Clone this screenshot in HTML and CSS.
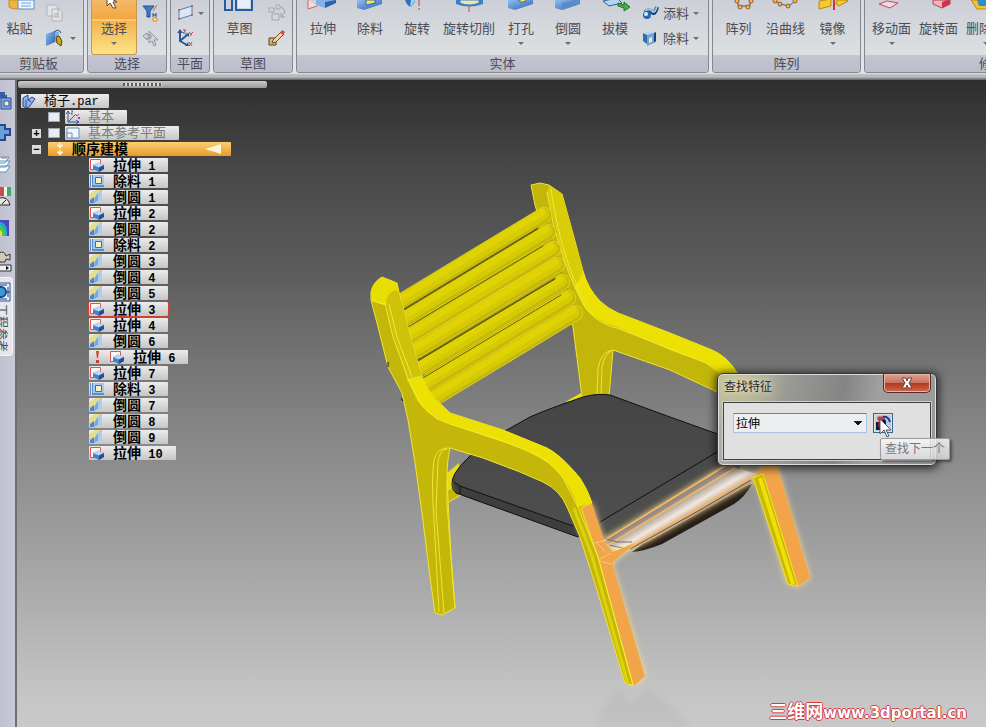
FILE: index.html
```html
<!DOCTYPE html>
<html lang="zh-CN">
<head>
<meta charset="utf-8">
<title>椅子.par</title>
<link rel="stylesheet" href="styles.css">
</head>
<body>
<svg class="defs" aria-hidden="true">
  <defs>
    <linearGradient id="blue" x1="0" y1="0" x2="1" y2="1"><stop offset="0" stop-color="#8fbdf0"/><stop offset="1" stop-color="#2a62b0"/></linearGradient>
    <symbol id="i-extrude" viewBox="0 0 16 14"><path d="M1.500 1.500h10v10h-10z" fill="#fff6f4" stroke="#d8584e"/><path d="M4 7l5-2.500 6 2.500v4l-5 3-6-3z" fill="#4c80c4"/><path d="M4 7l5-2.500 6 2.500-5 2.500z" fill="#b8d8f8"/><path d="M10 9.500l5-2.500v4l-5 3z" fill="#244f92"/></symbol>
    <symbol id="i-cut" viewBox="0 0 16 14"><path d="M1 1h14v12H1z" fill="#5c8ccc"/><path d="M4 1h11v10H4z" fill="#a4c8f0"/><path d="M6.500 3.500h6v6h-6z" fill="#f4f0c8" stroke="#3d6cab"/><path d="M2.500 1v12" stroke="#d6e6f8"/></symbol>
    <symbol id="i-round" viewBox="0 0 16 14"><path d="M0 12V6Q2 1 7 0h6Q6 4 5 13z" fill="#e8dc90"/><path d="M5 13Q5 4 13 0v11q-4-1-8 2z" fill="#74aade"/><path d="M1 13v-3l4-3v6z" fill="#4e86c8"/><path d="M9 3l4-3v11H9z" fill="#a8cdf0"/></symbol>
  </defs>
</svg>

<header class="ribbon">
  <section class="group g-clip">
    <div class="tools">
      <button class="big"><svg width="32" height="12" viewBox="0 0 32 12"><path d="M5 0h16v7q-10 4-16 0z" fill="#f0b63c" stroke="#c68a20"/><path d="M14 0h16v9H14z" fill="#edf5ff" stroke="#5a8cc8"/><path d="M17 3h10M17 6h10" stroke="#6fa4de"/></svg><span>粘贴</span></button>
      <div class="stack">
        <button class="small" aria-label="复制"><svg width="18" height="18" viewBox="0 0 18 18"><path d="M1 1h8l3 3v8H1zM6 5h7l3 3v9H6z" fill="#e2e3e7" stroke="#b1b2b8"/><path d="M8 10h5M8 13h6" stroke="#b1b2b8"/></svg></button>
        <button class="small" aria-label="特征"><svg width="18" height="18" viewBox="0 0 18 18"><path d="M0 5l9-3v11l-9 4z" fill="url(#blue)"/><path d="M9 2l4 1v11l-4-1z" fill="#7eb0e8"/><path d="M8 3q5-4 7 1" fill="none" stroke="#254a80"/><path d="M10 8l3-1 3 5-1 5-4-3z" fill="#c8a820" stroke="#54430c"/></svg><i class="arrow"></i></button>
      </div>
    </div>
    <h2>剪贴板</h2>
  </section>
  <section class="group g-select">
    <div class="tools">
      <button class="big active"><svg width="32" height="12" viewBox="0 0 32 12"><path d="M9-4v10l3-3 3 5h3l-3-6h4z" fill="#fff" stroke="#58473a"/></svg><span>选择</span><i class="arrow"></i></button>
      <div class="stack">
        <button class="small" aria-label="过滤"><svg width="18" height="18" viewBox="0 0 18 18"><path d="M1 2h11L8 7v6H5V7z" fill="#3c7cc8" stroke="#204d8c"/><path d="M11 9v4M14 9v4M11 11h3" stroke="#234f94"/><path d="M15 1l-4 6" stroke="#d65830"/><path d="M11 14h4v3h-4z" fill="#fff0c0" stroke="#d88820"/></svg></button>
        <button class="small" aria-label="选取工具"><svg width="18" height="18" viewBox="0 0 18 18"><path d="M1 7l4-3v2h4v3H5v2zM7 2l9 9h-4l2 5-2 1-2-5-3 2z" fill="#d2d4da" stroke="#92959e"/></svg></button>
      </div>
    </div>
    <h2>选择</h2>
  </section>
  <section class="group g-plane">
    <div class="tools">
      <div class="stack">
        <button class="small" aria-label="平面"><svg width="18" height="18" viewBox="0 0 18 18"><path d="M2 6l13-4v9L2 15z" fill="#dbe7f7" stroke="#527eb6"/><g fill="#d0504c"><circle cx="2" cy="6" r="1"/><circle cx="15" cy="2" r="1"/><circle cx="15" cy="11" r="1"/><circle cx="2" cy="15" r="1"/></g></svg><i class="arrow"></i></button>
        <button class="small" aria-label="坐标系"><svg width="18" height="18" viewBox="0 0 18 18"><path d="M3 2v10l7 4M3 12l7-6" fill="none" stroke="#28589c" stroke-width="2"/><path d="M3 0l3 4H0zM12 4v4l-4-3zM12 17H8l3-4z" fill="#28589c"/><path d="M6 1h3L6 4h3M12 3l2 2 2-2M14 5v2M12 13l3 4M15 13l-3 4" fill="none" stroke="#c83e3e"/></svg></button>
      </div>
    </div>
    <h2>平面</h2>
  </section>
  <section class="group g-sketch">
    <div class="tools">
      <button class="big"><svg width="32" height="12" viewBox="0 0 32 12"><path d="M1 0v10h7V0M12 0v10h16V0" fill="none" stroke="#245ca8" stroke-width="2"/><path d="M14 0h12v8H14z" fill="#e5effd"/></svg><span>草图</span></button>
      <div class="stack">
        <button class="small" aria-label="复制草图"><svg width="18" height="18" viewBox="0 0 18 18"><path d="M1 4h5v4H1zM8 1h4v4H8zM4 10h7v6H4z" fill="#d6d7dc" stroke="#a4a6ac"/><path d="M13 3q7 4 1 9M13 9v4h4" fill="none" stroke="#999ca4"/></svg></button>
        <button class="small" aria-label="编辑草图"><svg width="18" height="18" viewBox="0 0 18 18"><path d="M1 9h7v7H1z" fill="#e3b75c" stroke="#4c4234"/><path d="M5 11l8-8 3 2-8 8-4 1z" fill="#f2d7a0" stroke="#6d4b2c"/><path d="M14 1l3 2-2 3-3-2z" fill="#d84b4b"/></svg></button>
      </div>
    </div>
    <h2>草图</h2>
  </section>
  <section class="group g-solid">
    <div class="tools">
      <button class="big"><svg width="32" height="12" viewBox="0 0 32 12"><path d="M1 0v9l9-3" fill="#f3dadc" stroke="#dd5e56"/><path d="M9 0h20v3l-11 5-9-3z" fill="#82b0e4"/><path d="M18 2l11-2v3l-11 5z" fill="#2f65a8"/></svg><span>拉伸</span></button>
      <button class="big"><svg width="32" height="12" viewBox="0 0 32 12"><path d="M3 0h25v4L10 10 3 8z" fill="url(#blue)"/><path d="M12 0h9v3l-9 2z" fill="#f7e45e" stroke="#3968a8"/></svg><span>除料</span></button>
      <button class="big"><svg width="32" height="12" viewBox="0 0 32 12"><path d="M4 0h10q0 4-5 7Q5 4 4 0z" fill="#2e71ba"/><path d="M10 0h4q-1 4-5 7z" fill="#9fd0f1"/><path d="M18 0v10" stroke="#c34040" stroke-dasharray="6 2"/></svg><span>旋转</span></button>
      <button class="big"><svg width="32" height="12" viewBox="0 0 32 12"><path d="M3 0h27v4q-14 5-27 0z" fill="#3d7fc4"/><path d="M7 0h19v3q-10 4-19 0z" fill="#eae6b8" stroke="#477fb8"/><path d="M16 6v6" stroke="#e04444"/></svg><span>旋转切削</span></button>
      <button class="big"><svg width="32" height="12" viewBox="0 0 32 12"><path d="M3 0h25v4L10 10 3 8z" fill="url(#blue)"/><path d="M13 0q5 5 9-1z" fill="#f6e262" stroke="#3968a8"/></svg><span>打孔</span><i class="arrow"></i></button>
      <button class="big"><svg width="32" height="12" viewBox="0 0 32 12"><path d="M3 0h25v4L10 10 3 8z" fill="url(#blue)"/><path d="M10 3l18-4v5L10 10z" fill="#5a8ccc"/></svg><span>倒圆</span><i class="arrow"></i></button>
      <button class="big"><svg width="32" height="12" viewBox="0 0 32 12"><path d="M4 1l14-3 5 5-13 3z" fill="#b3d7f0" stroke="#2a6290"/><path d="M19 3l6 2V2l6 5-6 4V8l-6-2z" fill="#42ac45" stroke="#267532"/></svg><span>拔模</span></button>
      <div class="stack labelled">
        <button class="small"><svg width="18" height="18" viewBox="0 0 18 18"><path d="M4 8q4-3 7 0t5-5" fill="none" stroke="#183b66" stroke-width="4"/><path d="M4 7q4-3 7 0t5-5" fill="none" stroke="#9bc8e8" stroke-width="2"/><circle cx="6" cy="11" r="4" fill="#2c67a7"/><circle cx="5" cy="10" r="2" fill="#dceefb"/></svg><span>添料</span><i class="arrow"></i></button>
        <button class="small"><svg width="18" height="18" viewBox="0 0 18 18"><path d="M2 4l4 2v9l-4-3z" fill="#2f6eae"/><path d="M2 4l7-2 6 2-6 2z" fill="#b9d4ea"/><path d="M6 6l7-2v10l-7 3z" fill="#6ca6d8"/><path d="M8 9l3-1v5l-3 1z" fill="#f2e7a3"/><path d="M13 4l2-1v9l-2 2z" fill="#184278"/></svg><span>除料</span><i class="arrow"></i></button>
      </div>
    </div>
    <h2>实体</h2>
  </section>
  <section class="group g-array">
    <div class="tools">
      <button class="big"><svg width="32" height="12" viewBox="0 0 32 12"><path d="M15 0v6h12V0" fill="none" stroke="#584a3e"/><g fill="#f2b460" stroke="#975b20"><circle cx="14" cy="1" r="2"/><circle cx="17" cy="7" r="2"/><circle cx="25" cy="7" r="2"/><circle cx="28" cy="1" r="2"/></g></svg><span>阵列</span></button>
      <button class="big"><svg width="32" height="12" viewBox="0 0 32 12"><path d="M4 0l6 4 9 2 7-6" fill="none" stroke="#3d5e8a"/><g fill="#f2b460" stroke="#975b20"><circle cx="5" cy="1" r="2"/><circle cx="10" cy="4" r="2"/><circle cx="18" cy="6" r="2"/><circle cx="25" cy="1" r="2"/></g></svg><span>沿曲线</span></button>
      <button class="big"><svg width="32" height="12" viewBox="0 0 32 12"><path d="M2 1l12-2v7L2 9zM20 0h8l3 1-9 5-3-2z" fill="#f5c82c" stroke="#b98816"/><path d="M17 0v10" stroke="#d03434" stroke-width="2"/></svg><span>镜像</span><i class="arrow"></i></button>
    </div>
    <h2>阵列</h2>
  </section>
  <section class="group g-modify">
    <div class="tools">
      <button class="big"><svg width="32" height="12" viewBox="0 0 32 12"><path d="M3 4l8-3 11 2-8 5z" fill="#eedce2" stroke="#bd4a60"/></svg><span>移动面</span><i class="arrow"></i></button>
      <button class="big"><svg width="32" height="12" viewBox="0 0 32 12"><path d="M10 0h17v4l-8 4-9-4z" fill="#edb5bc" stroke="#bb3f52"/><path d="M19 2l8-3v5l-8 4z" fill="#ce354d"/></svg><span>旋转面</span></button>
      <button class="big"><svg width="32" height="12" viewBox="0 0 32 12"><path d="M1 0h25v9H7z" fill="#f5c12d" stroke="#c38715"/><path d="M7 0h20v6H9z" fill="#328ccb"/></svg><span>删除面</span><i class="arrow"></i></button>
    </div>
    <h2>修改</h2>
  </section>
</header>

<div class="work">
  <nav class="side">
    <button aria-label="零件库"><svg width="12" height="20" viewBox="0 0 12 20"><path d="M0 2h5v4H0zM0 5h7v3H0z" fill="#335da4"/><path d="M1 8h10v11H1z" fill="#7fa4df" stroke="#27519b"/><path d="M4 11h5v5H4z" fill="#f5f0c3" stroke="#27519b"/></svg></button>
    <button aria-label="特征库"><svg width="12" height="20" viewBox="0 0 12 20"><path d="M-1 3h6v4h5v6H5v5h-6z" fill="#6b9edb" stroke="#214a8d" stroke-width="2"/></svg></button>
    <button aria-label="图层"><svg width="12" height="20" viewBox="0 0 12 20"><path d="M-1 3H9l-4 6h-6zM-1 7h11l-4 6h-7zM-1 12h11l-4 6h-7z" fill="#fff" stroke="#5795c2"/><path d="M1 4h6" stroke="#c55d5d"/></svg></button>
    <button aria-label="传感器"><svg width="12" height="20" viewBox="0 0 12 20"><path d="M0 1h4v9H0z" fill="#c74c50"/><path d="M4 1h3v9H4z" fill="#f4f5ee"/><path d="M7 1h4v9H7z" fill="#3cac62"/><path d="M-1 12q9-2 11 7H-1z" fill="#e7e4dc" stroke="#292929"/><path d="M2 18l4-4" stroke="#222"/></svg></button>
    <button aria-label="仿真"><svg width="12" height="20" viewBox="0 0 12 20"><path d="M0 2h9v16H0z" fill="#4b47bd"/><path d="M0 4q8 1 7 14H0z" fill="#22a8d0"/><path d="M0 7q6 2 5 11H0z" fill="#40c65a"/><path d="M0 12q3 2 2 6H0z" fill="#f1dc35"/></svg></button>
    <button aria-label="动画"><svg width="12" height="22" viewBox="0 0 12 22"><path d="M-1 3q5-3 7 3l4-2v6l-4-1-1 3h-6z" fill="#d2c8bd" stroke="#3e3531"/><path d="M-1 15h12v6H-1z" fill="#eee" stroke="#333"/><path d="M6 16l3 2-3 2z"/></svg></button>
    <button class="tab" aria-label="工程参考"><svg width="12" height="20" viewBox="0 0 12 20"><path d="M0 1h10v18H0" fill="#eaf2fa" stroke="#294e94"/><circle cx="1" cy="10" r="5" fill="#3c9bd7" stroke="#164a86" stroke-width="2"/><path d="M8 5v10M6 10h4M0 3h7M0 17h7" stroke="#203c84"/></svg><span>工程参考</span></button>
  </nav>

  <main class="view">
    <svg class="model" width="969" height="647" viewBox="17 80 969 647" role="img" aria-label="椅子">
      <defs>
        <linearGradient id="apron" gradientUnits="userSpaceOnUse" x1="665" y1="493" x2="684" y2="525"><stop offset="0" stop-color="#6c625b"/><stop offset=".35" stop-color="#9b938b"/><stop offset=".65" stop-color="#f2e8dc"/><stop offset="1" stop-color="#a38b75"/></linearGradient>
        <linearGradient id="seat" x1="0" y1="0" x2="0" y2="1"><stop offset="0" stop-color="#454545"/><stop offset="1" stop-color="#505050"/></linearGradient>
        <filter id="glow" x="-40%" y="-20%" width="180%" height="140%"><feDropShadow dx="0" dy="0" stdDeviation="3" flood-color="#ffdf86" flood-opacity=".9"/></filter>
        <filter id="soft"><feGaussianBlur stdDeviation="3"/></filter>
        <g id="slat"><path d="M0 0L142-86" stroke="#ece33a" stroke-width="16"/><path d="M0 0L142-86" stroke="#c6b906" stroke-width="15"/><path d="M0-1L141-87" stroke="#d6c906" stroke-width="12"/><path d="M-1-3L140-89" stroke="#e0d304" stroke-width="7"/></g>
      </defs>
      <path d="M596 727q5-22 22-36l14 12 16-14 20 14 25 24z" fill="#999" opacity=".15" filter="url(#soft)"/>

      <path d="M531 185L540 183 549 185 562 194 572 230 583 271Q588 289 600 301 607 308 618 313L670 333 712 350Q727 356 738 374V405L713 390 670 370 613 350 609 397H582L573 327 563 300 535 205z" fill="#c3b60a" stroke="#eee532"/>
      <path d="M549 185L562 194 572 230 583 271Q588 289 600 301L587 310Q575 294 563 257L547 192z" fill="#d8cd07"/>
      <path d="M583 271Q588 289 600 301 607 308 618 313L670 333 712 350Q727 356 738 374L730 385Q718 368 706 363L670 350 617 327Q598 323 584 307L575 288z" fill="#ece102"/>
      <path d="M547 192Q552 225 563 257T587 310Q600 325 617 328L706 363Q718 370 728 383" fill="none" stroke="#f1e73a"/>
      <path d="M551 189Q556 225 566 257T590 308" fill="none" stroke="#f1e73a"/>
      <path d="M597 395L598 369Q600 352 613 350M601 395L602 367Q604 355 611 351M575 286L583 281" fill="none" stroke="#eee532"/>

      <path d="M401 301L544 214 576 313 433 399z" fill="#b1a508"/>
      <g fill="none" stroke-linecap="round">
        <use href="#slat" x="402" y="301"/><use href="#slat" x="406" y="318"/><use href="#slat" x="411" y="335"/><use href="#slat" x="415" y="351"/><use href="#slat" x="420" y="368"/><use href="#slat" x="426" y="384"/><use href="#slat" x="433" y="399"/>
        <g stroke="#6a6216"><path d="M404 310L538 229M408 327L543 246M418 360L555 278M423 378L561 295"/><path d="M404 309L538 228M418 361L555 279" stroke="#4a4520"/></g>
      </g>

      <path d="M565 402l16-9v7z" fill="#e7dd18"/>
      <path d="M447 473l12-10v22l-12 10z" fill="#e6dc1c"/><path d="M447 491l8-6 9 8-17 10z" fill="#c3b60a" stroke="#efe742"/>
      <path d="M447 490v12" stroke="#222"/>

      <path d="M453 478Q455 470 473 453 490 438 505 431L530 417Q548 409 583 397 598 393 610 395L670 417 740 442V478L603 545 575 536 456 493Q451 486 453 478z" fill="url(#seat)"/>
      <path d="M454 482L460 486 573 526 577 536 456 493z" fill="#3e3e3e"/>
      <path d="M453 478Q455 470 473 453 490 438 505 431L530 417Q548 409 583 397 598 393 610 395L670 417 740 442M453 478Q450 488 456 493L578 537M454 482L460 486 573 526M460 486v8M600 522L717 452 740 440" fill="none" stroke="#101010"/>

      <path d="M632 552Q645 551 662 544L734 504Q745 497 752 484L700 502z" fill="#251d17"/>
      <g filter="url(#glow)">
        <path d="M602 540L725 465 757 474 750 484 660 535Q638 548 622 551L606 548z" fill="url(#apron)"/>
        <path d="M603 541L725 466M605 547L735 468M608 560L655 533 757 474" fill="none" stroke="#f3b568" stroke-width="2"/>
        <path d="M630 549L700 510 751 480" fill="none" stroke="#7a5026"/>
        <path d="M603 538l14 4 15 0M609 545l18 4" fill="none" stroke="#716b64"/>
      </g>

      <g filter="url(#glow)"><path d="M755 477L765 463H776L810 578 797 587 787 583z" fill="#f3a448"/></g>
      <path d="M753 478L763 474 798 586 788 584z" fill="#c8bb02" stroke="#f0e62a"/>
      <path d="M760 478L793 584" stroke="#f0df0b" stroke-width="4"/>

      <g filter="url(#glow)"><path d="M581 508L592 503 598 522 605 543 613 552 635 543 612 563 645 676 635 685 628 680z" fill="#f2a44a"/></g>
      <path d="M371 292Q373 282 382 277L397 283 399 292 402 303 412 343 422 377Q430 397 440 403L450 413 503 430 547 448Q561 455 580 478 588 490 592 503L581 508 598 557 633 685 625 683 597 590 580 537 567 507Q560 490 543 482L520 472 483 458 450 448Q447 460 447 480L451 557 455 608 442 615 435 613 430 577 422 513 415 463 408 420 402 393 388 367 378 327 371 300z" fill="#c4b70a" stroke="#efe633"/>
      <path d="M371 292Q373 282 382 277L397 283 399 292Q388 291 386 306L372 301z" fill="#e9de02"/>
      <path d="M386 303Q387 291 397 290L402 303 412 343 422 377 408 384 395 342z" fill="#cec20a"/>
      <path d="M408 380L422 377Q430 397 450 413L503 430 547 448Q561 455 580 478 588 490 592 503L578 507Q569 480 548 463 541 458 520 448L450 424Q426 416 416 398z" fill="#ece102"/>
      <path d="M385 303L393 337 408 378Q419 407 437 419L450 424 503 441 538 455Q555 465 563 478L578 507 598 557 633 685M389 304L397 337 412 377M372 300Q380 304 386 304M407 380L422 376" fill="none" stroke="#f3ea36"/>
      <path d="M574 508L592 556 628 684" fill="none" stroke="#ded30a" stroke-width="3"/>
      <path d="M450 448Q437 447 434 460 431 480 434 520L439 612M447 449Q440 449 438 462L436 510 444 613" fill="none" stroke="#eee532"/>
      <path d="M447 480V504L455 608" stroke="#eee532" fill="none"/>
      <path d="M388 362v5M401 398l2 3" stroke="#111"/>
      <path d="M594 543l13-3M598 560l13-7 M597 543l8 8M599 561l12 3" stroke="#f8c286" fill="none"/>
    </svg>

    <div class="grip"><i></i></div>
    <ul class="tree">
      <li><button class="chip root"><svg width="16" height="14" viewBox="0 0 16 14"><path d="M2 4l5-3v5l4-3 3 2-6 8-3 1-3-2z" fill="#91b4ed" stroke="#27458c"/><path d="M5 6v7M7 6l3 2" stroke="#27458c"/></svg><span>椅子<b>.par</b></span></button></li>
      <li class="l1"><input type="checkbox" aria-label="显示基本"><button class="chip grey"><svg width="16" height="14" viewBox="0 0 16 14"><path d="M3 1v11h11M3 12l7-7M1 4l2-3 2 3M11 10l3 2-3 2" fill="none" stroke="#2d5a98"/><path d="M6 1h2L6 4h2M10 4l2 2 2-2M13 7l2 2M15 7l-2 2" fill="none" stroke="#a44a8c"/></svg><span>基本</span></button></li>
      <li class="l1 open"><button class="toggle" aria-label="展开">+</button><input type="checkbox" aria-label="显示基本参考平面"><button class="chip grey"><svg width="16" height="14" viewBox="0 0 16 14"><path d="M2 2h12v10H2z" fill="#f2f7fd" stroke="#648ab8"/><path d="M2 7h5v5" fill="none" stroke="#648ab8"/></svg><span>基本参考平面</span></button></li>
      <li class="l1 open"><button class="toggle" aria-label="折叠">−</button><button class="chip mode"><svg width="12" height="14" viewBox="0 0 12 14"><path d="M6 0v4M3 3h6L6 6zM6 7v4M3 10h6l-3 3z" fill="#fff3cf" stroke="#fff3cf"/></svg><span>顺序建模</span><svg width="16" height="10" viewBox="0 0 16 10"><path d="M0 5L16 0v10z" fill="#fff4da"/></svg></button></li>
      <li class="l2"><button class="chip"><svg width="16" height="14"><use href="#i-extrude"/></svg><span>拉伸<b> 1</b></span></button></li>
      <li class="l2"><button class="chip"><svg width="16" height="14"><use href="#i-cut"/></svg><span>除料<b> 1</b></span></button></li>
      <li class="l2"><button class="chip"><svg width="16" height="14"><use href="#i-round"/></svg><span>倒圆<b> 1</b></span></button></li>
      <li class="l2"><button class="chip"><svg width="16" height="14"><use href="#i-extrude"/></svg><span>拉伸<b> 2</b></span></button></li>
      <li class="l2"><button class="chip"><svg width="16" height="14"><use href="#i-round"/></svg><span>倒圆<b> 2</b></span></button></li>
      <li class="l2"><button class="chip"><svg width="16" height="14"><use href="#i-cut"/></svg><span>除料<b> 2</b></span></button></li>
      <li class="l2"><button class="chip"><svg width="16" height="14"><use href="#i-round"/></svg><span>倒圆<b> 3</b></span></button></li>
      <li class="l2"><button class="chip"><svg width="16" height="14"><use href="#i-round"/></svg><span>倒圆<b> 4</b></span></button></li>
      <li class="l2"><button class="chip"><svg width="16" height="14"><use href="#i-round"/></svg><span>倒圆<b> 5</b></span></button></li>
      <li class="l2"><button class="chip found"><svg width="16" height="14"><use href="#i-extrude"/></svg><span>拉伸<b> 3</b></span></button></li>
      <li class="l2"><button class="chip"><svg width="16" height="14"><use href="#i-extrude"/></svg><span>拉伸<b> 4</b></span></button></li>
      <li class="l2"><button class="chip"><svg width="16" height="14"><use href="#i-round"/></svg><span>倒圆<b> 6</b></span></button></li>
      <li class="l2"><button class="chip"><svg width="16" height="14" viewBox="0 0 16 14"><path d="M7 1h3L9 8H8zM7 10h3v3H7z" fill="#cf3d31"/></svg><svg width="16" height="14"><use href="#i-extrude"/></svg><span>拉伸<b> 6</b></span></button></li>
      <li class="l2"><button class="chip"><svg width="16" height="14"><use href="#i-extrude"/></svg><span>拉伸<b> 7</b></span></button></li>
      <li class="l2"><button class="chip"><svg width="16" height="14"><use href="#i-cut"/></svg><span>除料<b> 3</b></span></button></li>
      <li class="l2"><button class="chip"><svg width="16" height="14"><use href="#i-round"/></svg><span>倒圆<b> 7</b></span></button></li>
      <li class="l2"><button class="chip"><svg width="16" height="14"><use href="#i-round"/></svg><span>倒圆<b> 8</b></span></button></li>
      <li class="l2"><button class="chip"><svg width="16" height="14"><use href="#i-round"/></svg><span>倒圆<b> 9</b></span></button></li>
      <li class="l2"><button class="chip"><svg width="16" height="14"><use href="#i-extrude"/></svg><span>拉伸<b> 10</b></span></button></li>
    </ul>

    <section class="dialog" aria-labelledby="find-title">
      <div class="titlebar"><h1 id="find-title">查找特征</h1><button class="close" aria-label="关闭"><svg width="14" height="12" viewBox="0 0 14 12"><path d="M2 1h4l1 3 1-3h4L9 6l3 5H8L7 8l-1 3H2l3-5z" fill="#fff" stroke="#6b403c"/></svg></button></div>
      <div class="client">
        <select aria-label="特征名称"><option>拉伸</option></select>
        <button class="next" aria-label="查找下一个"><svg width="16" height="16" viewBox="0 0 16 16"><path d="M0 0h16v16H0z" fill="#b5cee0"/><path d="M1 7h4v8H1zM6 6l3-3 2 3v9H7z" fill="#151b32"/><path d="M3 2h5v3H3zM4 4v8" fill="#cf3440" stroke="#cf3440"/><path d="M8 2q5-1 7 5" fill="none" stroke="#27349c" stroke-width="2"/></svg></button>
      </div>
      <div class="tip" role="tooltip">查找下一个</div>
      <svg class="cursor" width="12" height="20" viewBox="0 0 12 20"><path d="M1 1v15l4-4 3 7 2-1-3-6h5z" fill="#fff" stroke="#555"/></svg>
    </section>

    <p class="mark">三维网<span>www.3dportal.cn</span></p>
  </main>
</div>
</body>
</html>
```
FILE: styles.css
```css
* { box-sizing: border-box; }

body {
  margin: 0;
  min-height: 100vh;
  display: flex;
  flex-direction: column;
  overflow: hidden;
  font: 13px/16px "Noto Sans CJK SC", sans-serif;
  color: #4b4d58;
}

button {
  margin: 0;
  padding: 0;
  border: 0;
  background: none;
  font: inherit;
  color: inherit;
}

svg { display: block; flex: none; }
.defs { position: absolute; width: 0; height: 0; }

/* Ribbon */
.ribbon {
  display: flex;
  flex: none;
  gap: 3px;
  padding-bottom: 7px;
  background: linear-gradient(#d9dbe0, #e4e5e9 73px, #b9babd 75px, #b9babd 77px, #5c5c5e 80px);
  overflow: hidden;
}

.group {
  flex: none;
  display: flex;
  flex-direction: column;
  border: 1px solid #85878f;
  border-top: 0;
  border-radius: 0 0 4px 4px;
  background: linear-gradient(#cccfd7, #dde0e1 55px);
  overflow: hidden;
}

.group h2 {
  margin: 0;
  padding-bottom: 1px;
  font: inherit;
  text-align: center;
  background: linear-gradient(#c4c5d1, #bbbdcd);
}

.g-clip { width: 84px; border-left: 0; border-bottom-left-radius: 0; }
.g-clip h2 { padding-right: 6px; }
.g-select { width: 80px; }
.g-plane { width: 40px; }
.g-sketch { width: 80px; }
.g-solid { width: 413px; }
.g-array { width: 149px; }
.g-modify { width: 256px; }

.tools { display: flex; height: 55px; }
.g-clip .tools { gap: 9px; padding-left: 2px; }
.g-select .tools { gap: 5px; padding-left: 3px; }
.g-plane .tools { padding-left: 6px; }
.g-sketch .tools { gap: 11px; padding-left: 8px; }
.g-solid .tools { gap: 13px; padding-left: 9px; }
.g-array .tools { gap: 10px; padding-left: 8px; }
.g-modify .tools { gap: 8px; padding-left: 7px; }

.big {
  min-width: 35px;
  display: flex;
  flex-direction: column;
  align-items: center;
  padding-bottom: 2px;
  white-space: nowrap;
}
.big span { margin-top: 8px; }
.g-solid .big { min-width: 34px; }
.g-solid .big:nth-child(4) { width: 44px; }
.g-select .big { width: 46px; }

.active {
  border: 1px solid #c29a52;
  border-top: 0;
  border-radius: 0 0 3px 3px;
  background: linear-gradient(#f3b968, #f4a63f 19px, #fbe5ae 20px, #f4b44b 21px, #fbe487);
}

.stack {
  display: flex;
  flex-direction: column;
  gap: 7px;
  padding-top: 4px;
}
.labelled { margin-left: -4px; }
.small { display: flex; align-items: center; gap: 3px; }
.labelled .small { gap: 4px; }

.arrow {
  flex: none;
  border: 3px solid transparent;
  border-top-color: #6d6e74;
  border-bottom: 0;
}
.big .arrow { margin-top: 6px; }
.g-clip .arrow { margin-left: 3px; }

/* Work area */
.work { flex: 1; display: flex; }

.side {
  flex: none;
  width: 17px;
  display: flex;
  flex-direction: column;
  align-items: flex-start;
  gap: 12px;
  padding-top: 10px;
  background: linear-gradient(90deg, #bfc1cf, #c7c9d5);
  border-right: 2px solid #6d6e73;
}
.tab {
  width: 13px;
  margin-top: -7px;
  padding: 4px 0 3px;
  background: #e6e7ec;
  border: 1px solid #f4f4f6;
  border-left: 0;
  border-radius: 0 4px 4px 0;
}
.tab span {
  width: 12px;
  display: flex;
  justify-content: flex-end;
  padding-right: 4px;
  margin-top: 2px;
  font-size: 12px;
  writing-mode: vertical-rl;
  text-orientation: sideways;
  line-height: 12px;
}

.view {
  flex: 1;
  min-width: 0;
  position: relative;
  background: linear-gradient(#2e2e2e, #484848 14%, #5d5d5d 30%, #7c7c7c 48%, #a1a1a1 73%, #c6c6c6 96%, #c9c9c9);
}
.model { position: absolute; left: 0; top: 0; }

.grip {
  position: relative;
  width: 249px;
  margin: 1px 0 0 1px;
  padding: 2px 0;
  border-radius: 2px;
  background: linear-gradient(#c9c9c9, #999);
}
.grip i {
  display: block;
  width: 39px;
  height: 3px;
  margin-left: 105px;
  background: repeating-linear-gradient(90deg, #565c70 0 2px, #d8d8d8 2px 4px);
}

/* Feature tree */
.tree {
  position: relative;
  width: max-content;
  margin: 5px 0 0;
  padding: 0;
  list-style: none;
}
.tree li { display: flex; align-items: center; height: 16px; }
.tree .l1 { padding-left: 31px; gap: 5px; }
.tree .open { padding-left: 15px; }
.tree .l2 { padding-left: 72px; }
.tree li:first-child { padding-left: 4px; }

.toggle {
  flex: none;
  width: 9px;
  height: 9px;
  margin-right: 2px;
  background: #d8dcdc;
  color: #000;
  font: bold 11px/9px "Liberation Sans", sans-serif;
}
.tree input {
  appearance: none;
  flex: none;
  width: 12px;
  height: 10px;
  margin: 0;
  background: #e9edf3;
  border: 1px solid #9ea4ad;
}

.chip {
  display: flex;
  align-items: center;
  gap: 8px;
  height: 14px;
  padding-right: 13px;
  background: linear-gradient(#ececec, #c6c6c6);
  border-radius: 1px;
  color: #000;
  font-size: 14px;
  font-weight: bold;
  line-height: 14px;
  white-space: pre;
}
.chip svg + svg { margin-left: -4px; }
.chip span { line-height: 12px; height: 14px; }
.chip b { font: bold 12px/12px "Liberation Mono", monospace; }
.root { gap: 7px; padding-right: 10px; font-size: 13px; font-weight: normal; }
.root b { font-weight: normal; }
.grey { gap: 7px; color: #7c7c7c; font-size: 13px; font-weight: normal; }
.mode {
  width: 183px;
  padding: 0 10px 0 6px;
  gap: 6px;
  background: linear-gradient(#f9cf74, #e99b28);
}
.mode span { flex: 1; text-align: left; }
.found { outline: 1px solid #cf4235; }

/* Find dialog */
.dialog {
  position: absolute;
  left: 700px;
  top: 293px;
  width: 220px;
  padding: 0 5px 5px;
  border: 1px solid #35363a;
  border-radius: 6px;
  background:
    radial-gradient(circle at 20px 8px, rgba(214, 208, 140, .7), transparent 50px),
    linear-gradient(100deg, #b2b2aa, #858585 55%, #a0a0a0 70%, #999);
  box-shadow: inset 0 0 0 1px #ddd, 0 1px 8px 2px rgba(0, 0, 0, .65);
}
.titlebar { display: flex; justify-content: space-between; }
h1 {
  margin: 4px 0 8px 1px;
  font-size: 12px;
  line-height: 16px;
  font-weight: normal;
  color: #1f2b30;
  text-shadow: 0 0 6px #fff;
}
.close {
  width: 48px;
  height: 19px;
  display: grid;
  place-items: center;
  border: 1px solid #542e2c;
  border-top: 0;
  border-radius: 0 0 5px 5px;
  background: linear-gradient(#dda392, #c8705f 50%, #b33923 52%, #cd6b4b);
  box-shadow: inset 0 0 0 1px #e3b6aa;
}
.client {
  display: flex;
  align-items: flex-start;
  gap: 6px;
  padding: 10px 9px 26px;
  border: 1px solid #3d3e42;
  outline: 1px solid #d0d0d0;
  background: #e0e0e0;
}
.client select {
  appearance: none;
  flex: none;
  width: 134px;
  height: 20px;
  padding: 0 2px;
  border: 1px solid #a9c4e3;
  border-top-color: #5e84b1;
  border-radius: 0;
  font: 12px/16px "Noto Sans CJK SC", sans-serif;
  color: #000;
  background: conic-gradient(from -45deg at 50% 100%, #111 90deg, transparent 0) right 4px center / 8px 4px no-repeat, #eceef0;
}
.next { padding: 1px; border: 1px solid #356992; }

.tip {
  position: absolute;
  left: 162px;
  top: 64px;
  padding: 1px 4px 3px;
  border: 1px solid #9c9c9c;
  border-radius: 2px;
  background: linear-gradient(rgba(246, 246, 246, .85), rgba(215, 215, 218, .85));
  box-shadow: 2px 2px 3px rgba(0, 0, 0, .45);
  color: #777;
  font-size: 12px;
  white-space: nowrap;
}
.cursor { position: absolute; left: 161px; top: 44px; }

.mark {
  position: absolute;
  right: 19px;
  bottom: 4px;
  margin: 0;
  font-size: 18px;
  line-height: 20px;
  font-weight: bold;
  color: #fff;
  text-shadow: 1px 0 #d8383c, -1px 0 #d8383c, 0 1px #d8383c, 0 -1px #d8383c;
}
.mark span { font: 15px/20px "DejaVu Sans", sans-serif; font-weight: bold; }
```
